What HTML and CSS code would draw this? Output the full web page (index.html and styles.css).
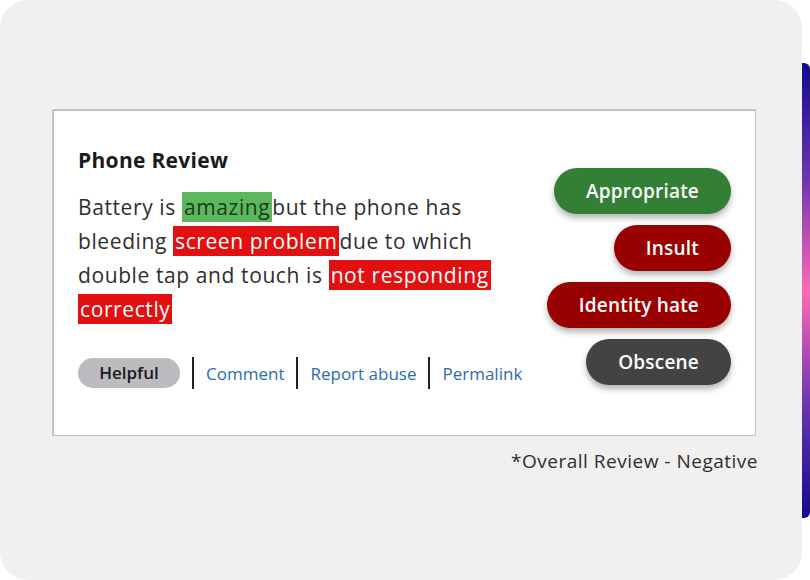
FILE: index.html
```html
<!DOCTYPE html>
<html>
<head>
<meta charset="utf-8">
<link rel="stylesheet" href="styles.css">
</head>
<body>
<div class="page">
  <div class="panel">
    <div class="card">
      <div class="review">
        <h1 class="title">Phone Review</h1>
        <p class="text">Battery is <span class="hl pos">amazing</span>but the phone has<br>bleeding <span class="hl neg">screen problem</span>due to which<br>double tap and touch is <span class="hl neg">not responding</span><br><span class="hl neg">correctly</span></p>
        <div class="actions">
          <span class="helpful">Helpful</span>
          <span class="sep"></span>
          <a class="link">Comment</a>
          <span class="sep"></span>
          <a class="link">Report abuse</a>
          <span class="sep"></span>
          <a class="link">Permalink</a>
        </div>
      </div>
      <div class="tags">
        <span class="tag green">Appropriate</span>
        <span class="tag red">Insult</span>
        <span class="tag red">Identity hate</span>
        <span class="tag dark">Obscene</span>
      </div>
    </div>
    <div class="overall">*Overall Review - Negative</div>
  </div>
  <div class="bar"></div>
</div>
</body>
</html>
```

FILE: styles.css
```css
html, body {
  margin: 0;
  padding: 0;
  background: #ffffff;
}
body {
  font-family: "Open Sans", "Lato", sans-serif;
  color: #2b2b2b;
}
.page {
  display: flex;
  width: 810px;
  height: 580px;
  overflow: hidden;
}
.panel {
  width: 802px;
  height: 580px;
  flex: none;
  background: #f0f0f0;
  border-radius: 28px;
  padding: 109px 0 0 52px;
  box-sizing: border-box;
}
.bar {
  width: 8px;
  height: 455px;
  margin-top: 63px;
  flex: none;
  border-radius: 0 6px 6px 0;
  background: linear-gradient(to bottom, #120a8f 0%, #6b35b0 25%, #ff69b4 50%, #6b35b0 75%, #120a8f 100%);
}
.card {
  width: 704px;
  height: 327px;
  box-sizing: border-box;
  background: #fff;
  border: 2px solid #c4c4c4;
  border-right-width: 1px;
  border-bottom-width: 1px;
  display: flex;
  justify-content: space-between;
  padding: 35px 24px 0 24px;
}
.review {
  display: flex;
  flex-direction: column;
}
.title {
  margin: 0;
  font-size: 21px;
  font-weight: 700;
  letter-spacing: 0.3px;
  color: #1a1a1a;
  line-height: 28px;
}
.text {
  margin: 16px 0 0 0;
  font-size: 21px;
  letter-spacing: 0.6px;
  line-height: 34px;
  color: #2e2e2e;
}
.hl {
  padding: 1px 2px;
}
.pos {
  background: #5cb85c;
  color: #1f3a1f;
}
.neg {
  background: #e21010;
  color: #ffffff;
}
.actions {
  display: flex;
  align-items: center;
  margin-top: 31px;
  gap: 12px;
}
.helpful {
  background: #bcbcc0;
  color: #1a1a1a;
  font-size: 17px;
  font-weight: 600;
  width: 102px;
  height: 30px;
  line-height: 30px;
  text-align: center;
  border-radius: 15px;
}
.sep {
  width: 2px;
  height: 32px;
  background: #222;
}
.link {
  color: #2b6cb0;
  font-size: 17px;
  font-weight: 500;
}
.tags {
  display: flex;
  flex-direction: column;
  align-items: flex-end;
  gap: 11px;
  padding-top: 22px;
}
.tag {
  height: 46px;
  line-height: 46px;
  border-radius: 23px;
  color: #fff;
  font-size: 19px;
  font-weight: 600;
  letter-spacing: 0.2px;
  padding: 0 32px;
  box-shadow: 0 4px 6px rgba(0, 0, 0, 0.3);
}
.green { background: #327f35; }
.red { background: #990000; }
.dark { background: #434343; }
.overall {
  width: 706px;
  text-align: right;
  margin-top: 12px;
  font-size: 19px;
  letter-spacing: 0.5px;
  color: #2e2e2e;
}
```
